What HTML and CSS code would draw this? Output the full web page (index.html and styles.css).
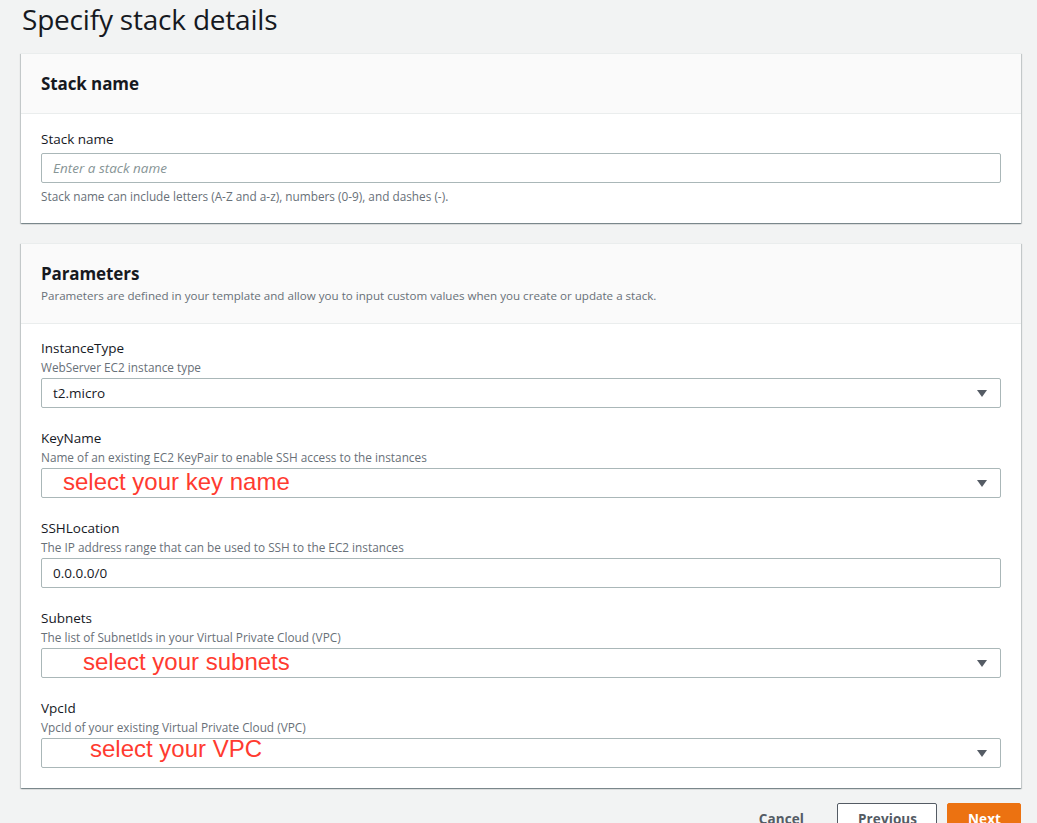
FILE: index.html
```html
<!DOCTYPE html>
<html lang="en">
<head>
<meta charset="utf-8">
<title>Specify stack details</title>
<link rel="stylesheet" href="styles.css">
</head>
<body>
<main class="page">
  <h1 class="page-title">Specify stack details</h1>

  <section class="panel">
    <header class="panel-header">
      <h2 class="panel-title">Stack name</h2>
    </header>
    <div class="panel-body">
      <div class="field">
        <label class="field-label">Stack name</label>
        <div class="input input-empty"><span class="placeholder">Enter a stack name</span></div>
        <p class="field-help">Stack name can include letters (A-Z and a-z), numbers (0-9), and dashes (-).</p>
      </div>
    </div>
  </section>

  <section class="panel">
    <header class="panel-header">
      <h2 class="panel-title">Parameters</h2>
      <p class="panel-desc">Parameters are defined in your template and allow you to input custom values when you create or update a stack.</p>
    </header>
    <div class="panel-body params">
      <div class="field">
        <div class="field-label">InstanceType</div>
        <div class="field-desc">WebServer EC2 instance type</div>
        <div class="input select"><span class="value">t2.micro</span><span class="caret"></span></div>
      </div>
      <div class="field">
        <div class="field-label">KeyName</div>
        <div class="field-desc">Name of an existing EC2 KeyPair to enable SSH access to the instances</div>
        <div class="input select"><span class="annot annot-key">select your key name</span><span class="caret"></span></div>
      </div>
      <div class="field">
        <div class="field-label">SSHLocation</div>
        <div class="field-desc">The IP address range that can be used to SSH to the EC2 instances</div>
        <div class="input"><span class="value">0.0.0.0/0</span></div>
      </div>
      <div class="field">
        <div class="field-label">Subnets</div>
        <div class="field-desc">The list of SubnetIds in your Virtual Private Cloud (VPC)</div>
        <div class="input select"><span class="annot annot-subnets">select your subnets</span><span class="caret"></span></div>
      </div>
      <div class="field">
        <div class="field-label">VpcId</div>
        <div class="field-desc">VpcId of your existing Virtual Private Cloud (VPC)</div>
        <div class="input select"><span class="annot annot-vpc">select your VPC</span><span class="caret"></span></div>
      </div>
    </div>
  </section>

  <div class="actions">
    <button class="btn btn-link">Cancel</button>
    <button class="btn btn-normal">Previous</button>
    <button class="btn btn-primary">Next</button>
  </div>
</main>
</body>
</html>
```

FILE: styles.css
```css
* { box-sizing: border-box; }

html, body {
  margin: 0;
  padding: 0;
  background: #f2f3f3;
}

body {
  font-family: "Open Sans", "Noto Sans", sans-serif;
  color: #16191f;
  overflow: hidden;
}

.page {
  width: 1000px;
  margin-left: 21px;
}

.page-title {
  margin: 0;
  font-size: 28px;
  font-weight: 400;
  line-height: 38px;
  padding-left: 1px;
  color: #16191f;
  letter-spacing: -0.2px;
}

.panel {
  margin-top: 15px;
  background: #fff;
  border-top: 1px solid #eaeded;
  box-shadow: 0 1px 1px 0 rgba(0, 28, 36, 0.3), 1px 1px 1px 0 rgba(0, 28, 36, 0.15), -1px 1px 1px 0 rgba(0, 28, 36, 0.15);
}

.panel + .panel { margin-top: 20px; }

.panel-header {
  background: #fafafa;
  border-bottom: 1px solid #eaeded;
  padding: 19px 20px 18px;
}

.panel-title {
  margin: 0;
  font-size: 17px;
  font-weight: 700;
  line-height: 22px;
  letter-spacing: -0.1px;
}

.panel-desc {
  margin: 2px 0 0;
  font-size: 11.6px;
  line-height: 18px;
  color: #687078;
}

.panel-body {
  padding: 14px 20px 18px;
}

.panel-body.params {
  padding: 14px 20px 20px;
  display: flex;
  flex-direction: column;
  gap: 20px;
}

.field-label {
  display: block;
  font-size: 13.5px;
  line-height: 22px;
  color: #16191f;
}

.params .field-label { line-height: 20px; }

.field-desc {
  font-size: 11.8px;
  line-height: 18px;
  color: #687078;
}

.input {
  height: 30px;
  margin-top: 3px;
  border: 1px solid #aab7b8;
  border-radius: 2px;
  background: #fff;
  display: flex;
  align-items: center;
  padding: 0 13px 0 11px;
  font-size: 13.5px;
  color: #16191f;
}

.params .input { margin-top: 2px; }

.placeholder {
  font-style: italic;
  color: #879596;
}

.field-help {
  margin: 4px 0 0;
  font-size: 11.8px;
  line-height: 18px;
  color: #687078;
}

.select .value,
.select .annot { flex: 1; }

.caret {
  margin-left: auto;
  width: 0;
  height: 0;
  border-left: 5px solid transparent;
  border-right: 5px solid transparent;
  border-top: 7px solid #545b64;
}

.annot {
  font-family: "Liberation Sans", Arial, sans-serif;
  font-size: 24px;
  line-height: 28px;
  color: #ff3b30;
}

.annot-key { margin-left: 10px; margin-bottom: 2px; }
.annot-subnets { margin-left: 30px; margin-bottom: 2px; }
.annot-vpc { margin-left: 37px; margin-bottom: 8px; }

.actions {
  margin-top: 15px;
  display: flex;
  justify-content: flex-end;
  gap: 10px;
}

.btn {
  font-family: "Open Sans", "Noto Sans", sans-serif;
  font-size: 13.5px;
  font-weight: 700;
  height: 32px;
  border-radius: 2px;
  padding: 0 20px;
  cursor: pointer;
  letter-spacing: 0.1px;
}

.btn-link {
  background: transparent;
  border: 1px solid transparent;
  color: #545b64;
  padding: 0 20px;
  margin-right: 2px;
}

.btn-normal {
  width: 100px;
  background: #fff;
  border: 1px solid #545b64;
  color: #545b64;
}

.btn-primary {
  width: 74px;
  background: #ec7211;
  border: 1px solid #ec7211;
  color: #fff;
}
```
